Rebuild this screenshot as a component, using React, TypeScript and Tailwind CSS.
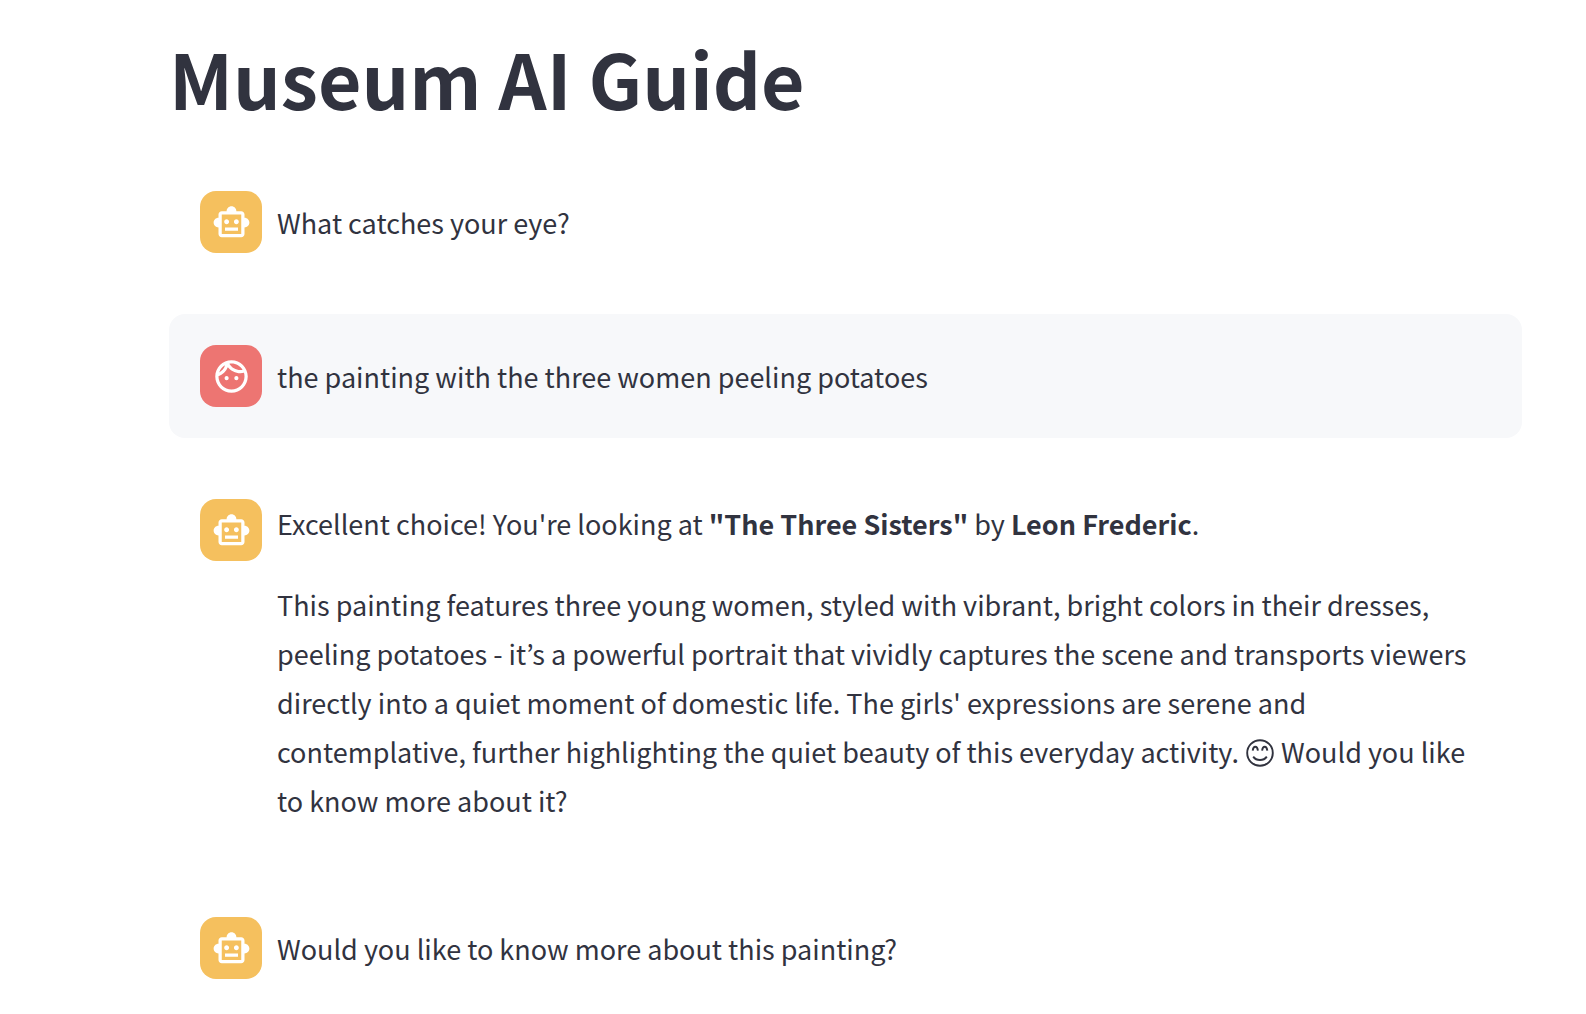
import React from "react";

function BotIcon() {
  return (
    <svg viewBox="0 0 24 24" className="size-[39px]" fill="currentColor" aria-hidden="true">
      <path d="M20 9V7c0-1.100-.9-2-2-2h-3c0-1.660-1.340-3-3-3S9 3.340 9 5H6c-1.100 0-2 .9-2 2v2c-1.660 0-3 1.340-3 3s1.340 3 3 3v4c0 1.100.9 2 2 2h12c1.100 0 2-.9 2-2v-4c1.660 0 3-1.340 3-3s-1.340-3-3-3zm-2 10H6V7h12v12zm-9-6c-.83 0-1.500-.67-1.500-1.500S8.170 10 9 10s1.500.67 1.500 1.500S9.830 13 9 13zm7.500-1.500c0 .83-.67 1.500-1.500 1.500s-1.500-.67-1.500-1.500.67-1.500 1.500-1.500 1.500.67 1.500 1.500zM8 15h8v2H8v-2z" />
    </svg>
  );
}

function FaceIcon() {
  return (
    <svg viewBox="0 0 24 24" className="size-[39px]" fill="currentColor" aria-hidden="true">
      <path d="M10.250 13c0 .69-.56 1.250-1.250 1.250S7.750 13.690 7.750 13s.56-1.250 1.250-1.250 1.250.56 1.250 1.250zM15 11.750c-.69 0-1.250.56-1.250 1.250s.56 1.250 1.250 1.250 1.250-.56 1.250-1.250-.56-1.250-1.250-1.250zm7 .250c0 5.520-4.480 10-10 10S2 17.520 2 12 6.480 2 12 2s10 4.480 10 10zM10.660 4.120C12.060 6.440 14.600 8 17.500 8c.46 0 .91-.05 1.340-.12C17.440 5.560 14.900 4 12 4c-.46 0-.91.05-1.340.12zM4.420 9.470c1.710-.97 3.030-2.550 3.660-4.440C6.370 6 5.050 7.580 4.420 9.470zM20 12c0-.78-.12-1.530-.33-2.240-.7.150-1.420.240-2.170.240-3.130 0-5.920-1.440-7.760-3.690C8.690 8.870 6.600 10.880 4 11.860c.01.040 0 .09 0 .14 0 4.410 3.590 8 8 8s8-3.590 8-8z" />
    </svg>
  );
}

function SmileIcon() {
  return (
    <svg
      viewBox="0 0 28 28"
      className="mx-px inline size-7 align-[-4px]"
      fill="none"
      stroke="currentColor"
      strokeWidth="1.900"
      role="img"
      aria-label="😊"
    >
      <circle cx="14" cy="14" r="12.800" />
      <path d="M6.700 11.600c.5-5.200 4.700-5.200 5.200 0M16.100 11.600c.5-5.200 4.700-5.200 5.200 0M7.200 17.600c3.200 4.600 10.400 4.600 13.600 0" />
    </svg>
  );
}

type Role = "assistant" | "user";

function Message({ role, children }: { role: Role; children: React.ReactNode }) {
  const isUser = role === "user";
  return (
    <article className={isUser ? "flex gap-[15px] rounded-2xl bg-[#f7f8fa] p-[31px]" : "flex gap-[15px] p-[31px]"}>
      <div
        className={
          isUser
            ? "flex size-[62px] shrink-0 items-center justify-center rounded-2xl bg-[#ed7572] text-white"
            : "flex size-[62px] shrink-0 items-center justify-center rounded-2xl bg-[#f5c05e] text-white"
        }
      >
        {isUser ? <FaceIcon /> : <BotIcon />}
      </div>
      <div className="min-w-0 flex-1 self-center text-[27px] leading-[49px]">{children}</div>
    </article>
  );
}

export default function App() {
  return (
    <main className="min-h-screen bg-white pt-8 pr-16 pl-[169px] font-['Noto_Sans_CJK_KR',sans-serif] text-[#31333f]">
      <h1 className="text-[75px] leading-[92px] font-bold">Museum AI Guide</h1>
      <section className="mt-9 flex flex-col gap-[30px]" aria-label="Conversation">
        <Message role="assistant">What catches your eye?</Message>
        <Message role="user">the painting with the three women peeling potatoes</Message>
        <Message role="assistant">
          <p>
            Excellent choice! You're looking at <strong className="font-semibold">"The Three Sisters"</strong> by{" "}
            <strong className="font-semibold">Leon Frederic</strong>.
          </p>
          <p className="mt-8">
            This painting features three young women, styled with vibrant, bright colors in their dresses, peeling
            potatoes - it’s a powerful portrait that vividly captures the scene and transports viewers directly into a
            quiet moment of domestic life. The girls' expressions are serene and contemplative, further highlighting the
            quiet beauty of this everyday activity. <SmileIcon /> Would you like to know more about it?
          </p>
        </Message>
        <Message role="assistant">Would you like to know more about this painting?</Message>
      </section>
    </main>
  );
}
